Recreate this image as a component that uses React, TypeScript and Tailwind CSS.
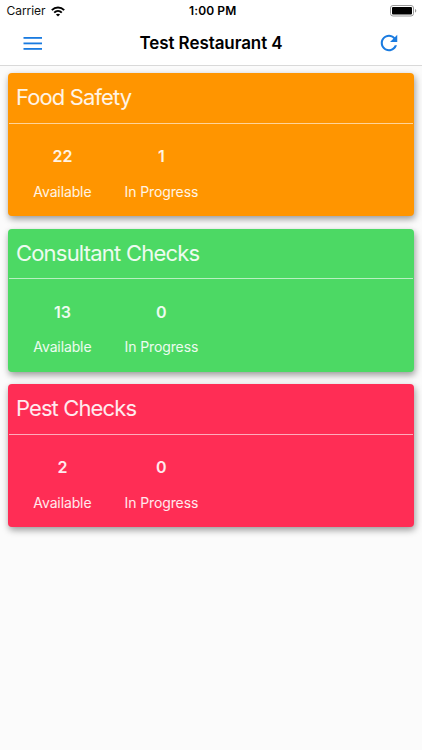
type Card = { title: string; available: number; inProgress: number; color: string; titleSpacing: string };

const cards: Card[] = [
  { title: 'Food Safety', available: 22, inProgress: 1, color: 'bg-[#ff9500]', titleSpacing: 'tracking-[-0.87px]' },
  { title: 'Consultant Checks', available: 13, inProgress: 0, color: 'bg-[#4cd964]', titleSpacing: 'tracking-[-0.78px]' },
  { title: 'Pest Checks', available: 2, inProgress: 0, color: 'bg-[#ff2d55]', titleSpacing: 'tracking-[-0.88px]' },
];

function StatusBar() {
  return (
    <div className="grid h-[22px] grid-cols-3 items-center pl-[6.5px] pr-[5px] text-[12px] leading-none text-[#111]">
      <div className="flex items-center gap-[6px]">
        <span className="tracking-[-0.05px]">Carrier</span>
        <svg width="14" height="11" viewBox="0 0 14 11" fill="none" stroke="#000" strokeWidth="1.9">
          <path d="M0.8 4.1C4.3 0.6 9.7 0.6 13.2 4.1" />
          <path d="M3.2 6.6C5.4 4.5 8.6 4.5 10.8 6.6" />
          <path d="M7 10.6L4.9 8.4C6.1 7.4 7.9 7.4 9.1 8.4Z" fill="#000" stroke="none" />
        </svg>
      </div>
      <span className="pl-[2px] text-center font-semibold tracking-[0.1px] text-black">1:00 PM</span>
      <svg className="justify-self-end" width="27" height="12" viewBox="0 0 27 12">
        <rect x="0.5" y="0.5" width="23" height="10.5" rx="2.5" fill="#fff" stroke="#999" />
        <rect x="2" y="2" width="20" height="7.5" rx="1" fill="#000" />
        <path d="M25 4v3.6c.8-.2 1.3-1 1.3-1.8S25.800 4.200 25 4z" fill="#999" />
      </svg>
    </div>
  );
}

function Header() {
  return (
    <header className="h-[66px] border-b border-[#d9d9d9] bg-white">
      <StatusBar />
      <div className="flex h-[43px] items-center justify-between pl-[23px] pr-[21px]">
        <svg width="20" height="14" viewBox="0 0 20 14" fill="#1a7be0">
          <rect x="0.5" y="0" width="18.500" height="1.800" />
          <rect x="0.5" y="5.500" width="18.500" height="1.800" />
          <rect x="0.5" y="11" width="18.500" height="1.800" />
        </svg>
        <h1 className="pl-[2px] text-[17px] font-semibold leading-none tracking-[-0.08px] text-black">Test Restaurant 4</h1>
        <svg className="-mt-px" width="24" height="24" viewBox="0 0 512 512" fill="#1a7be0">
          <path d="M256 388c-72.597 0-132-59.405-132-132 0-72.601 59.403-132 132-132 36.3 0 69.299 15.4 92.406 39.601L278 234h154V80l-51.698 51.702C348.406 99.798 304.406 80 256 80c-96.797 0-176 79.203-176 176s78.094 176 176 176c81.045 0 148.287-54.134 169.401-128H378.85c-18.745 49.561-67.138 84-122.85 84z" />
        </svg>
      </div>
    </header>
  );
}

function Stat({ value, label }: { value: number; label: string }) {
  return (
    <div className="flex flex-col items-center text-white/90">
      <span className="text-[16px] font-semibold leading-[20px]">{value}</span>
      <span className="mt-[16.5px] whitespace-nowrap text-[14px] leading-[18px] tracking-[-0.12px]">{label}</span>
    </div>
  );
}

export default function App() {
  return (
    <div className="min-h-[750px] w-full bg-[#fbfbfb] font-['Inter','Liberation_Sans',sans-serif]">
      <Header />
      <main className="flex flex-col gap-[12.5px] pl-[8.4px] pr-[8.4px] pt-[7.2px]">
        {cards.map((c) => (
          <section key={c.title} className={`h-[143px] rounded-[4px] shadow-[1px_3px_7px_rgba(0,0,0,0.4)] ${c.color}`}>
            <h2 className={`mx-px h-[50.5px] border-b border-white/60 pl-[6.5px] text-[22px] font-normal leading-[48px] text-white/90 ${c.titleSpacing}`}>{c.title}</h2>
            <div className="grid grid-cols-[58px_74px] gap-x-[33px] pl-[25px] pt-[22.4px]">
              <Stat value={c.available} label="Available" />
              <Stat value={c.inProgress} label="In Progress" />
            </div>
          </section>
        ))}
      </main>
    </div>
  );
}
